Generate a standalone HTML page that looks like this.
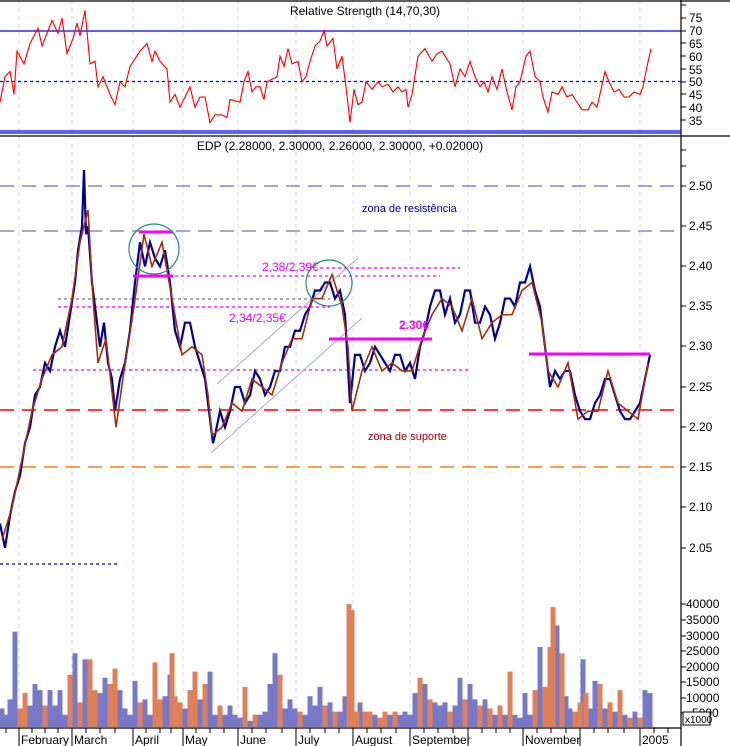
<!DOCTYPE html>
<html><head><meta charset="utf-8"><style>
html,body{margin:0;padding:0;background:#fff}
svg{display:block;font-family:"Liberation Sans",Arial,sans-serif}
</style></head><body>
<svg width="730" height="746" viewBox="0 0 730 746" xmlns="http://www.w3.org/2000/svg">
<rect width="730" height="746" fill="#fff"/>
<g stroke="#d8d8f0" stroke-dasharray="4,4" stroke-width="1">
<path d="M19 0V728M72 0V728M133 0V728M183 0V728M238 0V728M296 0V728M353 0V728M410 0V728M468 0V728M523 0V728M580 0V728M640 0V728"/>
</g>
<path d="M0 1H730M0 136H730M0 728H681M681 0V746" stroke="#000" stroke-width="1.2" fill="none"/>
<path d="M0 31H681M0 131H681M0 133H681" stroke="#0000ee" stroke-width="1.2"/>
<path d="M0 81.5H681" stroke="#0000cc" stroke-width="1.2" stroke-dasharray="3,3"/>
<text x="365" y="15" font-size="12" text-anchor="middle" fill="#000">Relative Strength (14,70,30)</text>
<g transform="translate(0,18) scale(1,-2.55) translate(0,-75)">
<polyline vector-effect="non-scaling-stroke" fill="none" stroke="#ff0000" stroke-width="1.1" points="0,42 5,52 10,54 14,45 17,62 24,57 30,65 38,71 42,64 48,70 52,74 58,69 62,75 67,61 73,67 77,73 80,68 85,78 90,57 95,58 98,48 103,52 110,45 115,41 120,50 125,48 130,56 135,59 140,62 147,65 152,58 155,62 160,58 167,55 170,42 175,45 180,40 185,44 190,48 195,40 200,44 205,44 210,34 215,37 222,37 227,36 230,43 240,42 244,50 248,54 252,46 256,48 260,48 264,43 267,50 272,51 277,52 280,60 284,56 288,63 292,57 298,58 302,50 306,52 310,58 315,64 320,66 324,70 327,64 333,67 337,55 342,60 346,48 350,34 354,47 358,41 362,42 366,50 372,47 378,50 382,48 388,49 393,46 398,48 402,46 406,47 408,40 412,45 418,60 425,63 432,58 437,61 442,62 450,57 455,48 460,55 465,52 470,58 475,52 480,48 484,50 488,46 492,52 497,47 502,55 507,46 512,39 516,48 520,50 526,60 530,62 535,52 540,50 543,44 548,38 552,46 558,45 562,48 567,44 572,45 577,42 582,39 588,39 592,42 597,40 601,47 605,54 609,50 614,46 619,47 624,44 629,44 634,46 640,45 643,48 647,56 651,63"/>
</g>
<g font-size="12" fill="#000">
<text x="689" y="22">75</text><text x="689" y="35">70</text><text x="689" y="48">65</text><text x="689" y="61">60</text><text x="689" y="74">55</text><text x="689" y="86">50</text><text x="689" y="99">45</text><text x="689" y="112">40</text><text x="689" y="125">35</text>
</g>
<path d="M681 5h5M681 18h5M681 31h5M681 43h5M681 56h5M681 69h5M681 82h5M681 94h5M681 107h5M681 120h5M681 150h5M681 166h5M681 186h5M681 226h5M681 266h5M681 306h5M681 346h5M681 387h5M681 427h5M681 467h5M681 507h5M681 548h5M681 604h5M681 620h5M681 636h5M681 651h5M681 667h5M681 682h5M681 698h5M681 713h5" stroke="#000"/>
<text x="340" y="150" font-size="12" text-anchor="middle" fill="#000">EDP (2.28000, 2.30000, 2.26000, 2.30000, +0.02000)</text>
<g font-size="12" fill="#000">
<text x="689" y="190">2.50</text><text x="689" y="230">2.45</text><text x="689" y="270">2.40</text><text x="689" y="310">2.35</text><text x="689" y="350">2.30</text><text x="689" y="391">2.25</text><text x="689" y="431">2.20</text><text x="689" y="471">2.15</text><text x="689" y="511">2.10</text><text x="689" y="552">2.05</text>
</g>
<path d="M0 186H681M0 231H681" stroke="#7070c8" stroke-width="1.2" stroke-dasharray="14,8"/>
<path d="M0 410H681" stroke="#ff0000" stroke-width="1.4" stroke-dasharray="14,8"/>
<path d="M0 467H681" stroke="#ff7f20" stroke-width="1.4" stroke-dasharray="14,8"/>
<path d="M0 564H118" stroke="#0000cc" stroke-width="1.2" stroke-dasharray="3,3"/>
<g stroke="#ff00ff" stroke-width="1.2" stroke-dasharray="3,3" fill="none">
<path d="M320 268H460M133 276H440M33 370H468M58 307H330"/>
</g>
<path d="M58 299H330" stroke="#555" stroke-width="1" stroke-dasharray="3,3"/>
<g stroke="#a8a8e0" stroke-width="1" fill="none">
<path d="M217 384L358 258M211 453L362 318"/>
</g>
<g transform="translate(0,186) scale(1,-804) translate(0,-2.5)" fill="none" stroke-width="2.2">
<polyline vector-effect="non-scaling-stroke" stroke="#000090" points="0,2.08 5,2.05 10,2.09 15,2.12 20,2.14 25,2.18 30,2.2 35,2.24 40,2.25 45,2.28 50,2.27 55,2.3 60,2.32 65,2.3 70,2.34 75,2.38 78,2.42 82,2.45 84,2.52 86,2.44 88,2.45 92,2.38 95,2.35 100,2.3 104,2.33 108,2.28 112,2.26 115,2.22 120,2.26 125,2.28 130,2.32 135,2.38 138,2.41 140,2.43 145,2.4 150,2.43 155,2.41 160,2.4 165,2.42 170,2.38 175,2.32 180,2.3 185,2.33 190,2.33 195,2.3 200,2.28 205,2.26 210,2.21 213,2.18 215,2.19 220,2.22 225,2.2 230,2.22 235,2.25 240,2.25 245,2.23 250,2.24 255,2.27 260,2.26 265,2.24 270,2.25 275,2.27 280,2.27 285,2.3 290,2.3 295,2.32 300,2.32 305,2.34 310,2.35 315,2.37 320,2.37 325,2.38 330,2.38 335,2.36 340,2.37 345,2.34 350,2.23 355,2.29 360,2.29 365,2.27 370,2.28 375,2.3 380,2.29 385,2.28 390,2.27 395,2.29 400,2.29 405,2.27 410,2.28 415,2.26 420,2.3 425,2.32 430,2.35 435,2.37 440,2.37 445,2.34 450,2.36 455,2.33 460,2.34 465,2.37 470,2.37 475,2.33 480,2.33 485,2.35 490,2.34 495,2.31 500,2.33 505,2.36 510,2.36 515,2.35 520,2.38 525,2.38 530,2.4 535,2.37 540,2.35 545,2.3 550,2.25 555,2.27 560,2.26 565,2.27 570,2.27 575,2.24 580,2.22 585,2.21 590,2.21 595,2.23 600,2.24 605,2.26 610,2.26 615,2.24 620,2.22 625,2.21 630,2.21 635,2.22 640,2.23 645,2.26 650,2.29"/>
<polyline vector-effect="non-scaling-stroke" stroke="#a03010" stroke-width="1.6" points="2,2.06 12,2.1 22,2.16 32,2.22 42,2.26 52,2.29 62,2.3 72,2.36 80,2.43 88,2.47 93,2.36 98,2.28 106,2.31 116,2.2 124,2.27 134,2.35 144,2.44 152,2.4 162,2.43 172,2.36 182,2.29 192,2.3 202,2.29 208,2.24 212,2.19 222,2.2 232,2.23 242,2.22 252,2.26 262,2.25 272,2.24 282,2.28 292,2.31 302,2.31 312,2.36 322,2.36 332,2.39 342,2.35 348,2.3 352,2.22 362,2.27 372,2.3 382,2.27 392,2.28 402,2.27 412,2.27 422,2.31 432,2.34 442,2.36 452,2.35 462,2.32 472,2.36 482,2.31 492,2.33 502,2.34 512,2.34 522,2.37 532,2.38 542,2.33 548,2.27 558,2.25 568,2.28 578,2.21 588,2.22 598,2.22 608,2.27 618,2.23 628,2.22 638,2.21 648,2.28"/>
</g>
<g stroke="#ff00ff" stroke-width="3">
<path d="M139 232H173M133 276H173M329 339H432M529 354H650"/>
</g>
<circle cx="154" cy="249" r="25" fill="none" stroke="#2a8a80" stroke-width="1.2"/>
<circle cx="329" cy="283" r="23" fill="none" stroke="#2a8a80" stroke-width="1.2"/>
<text x="362" y="212" font-size="11" fill="#000090">zona de resistência</text>
<text x="368" y="440" font-size="11" fill="#a00000">zona de suporte</text>
<text x="262" y="271" font-size="12" fill="#ff00ff">2,38/2,39€</text>
<text x="229" y="322" font-size="12" fill="#ff00ff">2,34/2,35€</text>
<text x="399" y="329" font-size="12" font-weight="bold" fill="#ff00ff">2.30€</text>
<g transform="translate(0,727) scale(1,-3.075)" stroke-width="5">
<path vector-effect="non-scaling-stroke" stroke="#7878c8" d="M2 0V6M5 0V4M10 0V9M15 0V31M30 0V7M35 0V14M40 0V12M50 0V12M55 0V7M60 0V12M65 0V4M75 0V24M85 0V22M100 0V11M105 0V16M120 0V12M125 0V6M130 0V4M135 0V15M145 0V9M150 0V4M165 0V10M170 0V17M185 0V6M200 0V9M210 0V18M215 0V4M225 0V4M230 0V7M235 0V4M240 0V3M250 0V2M260 0V4M265 0V5M270 0V14M275 0V24M285 0V6M290 0V9M295 0V6M305 0V4M310 0V10M315 0V7M320 0V13M330 0V8M340 0V5M345 0V10M360 0V8M375 0V4M390 0V4M400 0V4M405 0V5M410 0V4M415 0V11M425 0V14M435 0V8M440 0V7M445 0V8M455 0V7M460 0V16M470 0V14M475 0V9M485 0V9M495 0V4M505 0V4M515 0V4M520 0V3M525 0V11M530 0V4M540 0V26M557 0V33M566 0V10M570 0V6M583 0V22M590 0V6M595 0V15M605 0V6M615 0V5M625 0V4M635 0V5M645 0V12M650 0V11"/>
<path vector-effect="non-scaling-stroke" stroke="#e08058" d="M20 0V6M25 0V11M45 0V7M70 0V17M80 0V8M90 0V22M95 0V12M110 0V14M115 0V19M140 0V8M155 0V21M160 0V9M172 0V24M175 0V10M180 0V8M190 0V12M195 0V18M205 0V14M220 0V7M245 0V13M255 0V4M280 0V17M300 0V5M325 0V7M335 0V5M349 0V40M352 0V38M357 0V5M365 0V5M370 0V5M380 0V3M385 0V5M395 0V5M420 0V16M430 0V9M450 0V5M465 0V9M480 0V7M490 0V6M500 0V7M510 0V18M535 0V12M545 0V13M550 0V26M553 0V39M562 0V24M575 0V5M580 0V8M586 0V11M600 0V14M610 0V8M620 0V12M630 0V3M640 0V3"/>
</g>
<g font-size="12" fill="#000">
<text x="686" y="608">40000</text><text x="686" y="624">35000</text><text x="686" y="640">30000</text><text x="686" y="655">25000</text><text x="686" y="671">20000</text><text x="686" y="686">15000</text><text x="686" y="702">10000</text><text x="692" y="717">5000</text>
</g>
<rect x="683" y="712" width="27" height="13" fill="#fff" stroke="#000"/>
<text x="685" y="723" font-size="10" fill="#000">x1000</text>
<path d="M6 728v5M19 728v18M32 728v5M45 728v5M58 728v5M72 728v18M86 728v5M100 728v5M115 728v5M133 728v18M146 728v5M160 728v5M171 728v5M183 728v18M196 728v5M210 728v5M224 728v5M238 728v18M252 728v5M266 728v5M282 728v5M296 728v18M310 728v5M325 728v5M339 728v5M353 728v18M367 728v5M381 728v5M396 728v5M410 728v18M424 728v5M438 728v5M453 728v5M468 728v18M482 728v5M496 728v5M510 728v5M523 728v18M537 728v5M551 728v5M566 728v5M580 728v18M594 728v5M608 728v5M624 728v5M640 728v18M654 728v5M668 728v5" stroke="#000"/>
<g font-size="12" fill="#000">
<text x="21" y="744">February</text><text x="74" y="744">March</text><text x="135" y="744">April</text><text x="185" y="744">May</text><text x="240" y="744">June</text><text x="298" y="744">July</text><text x="355" y="744">August</text><text x="412" y="744">September</text><text x="525" y="744">November</text><text x="642" y="744">2005</text>
</g>
</svg>
</body></html>
